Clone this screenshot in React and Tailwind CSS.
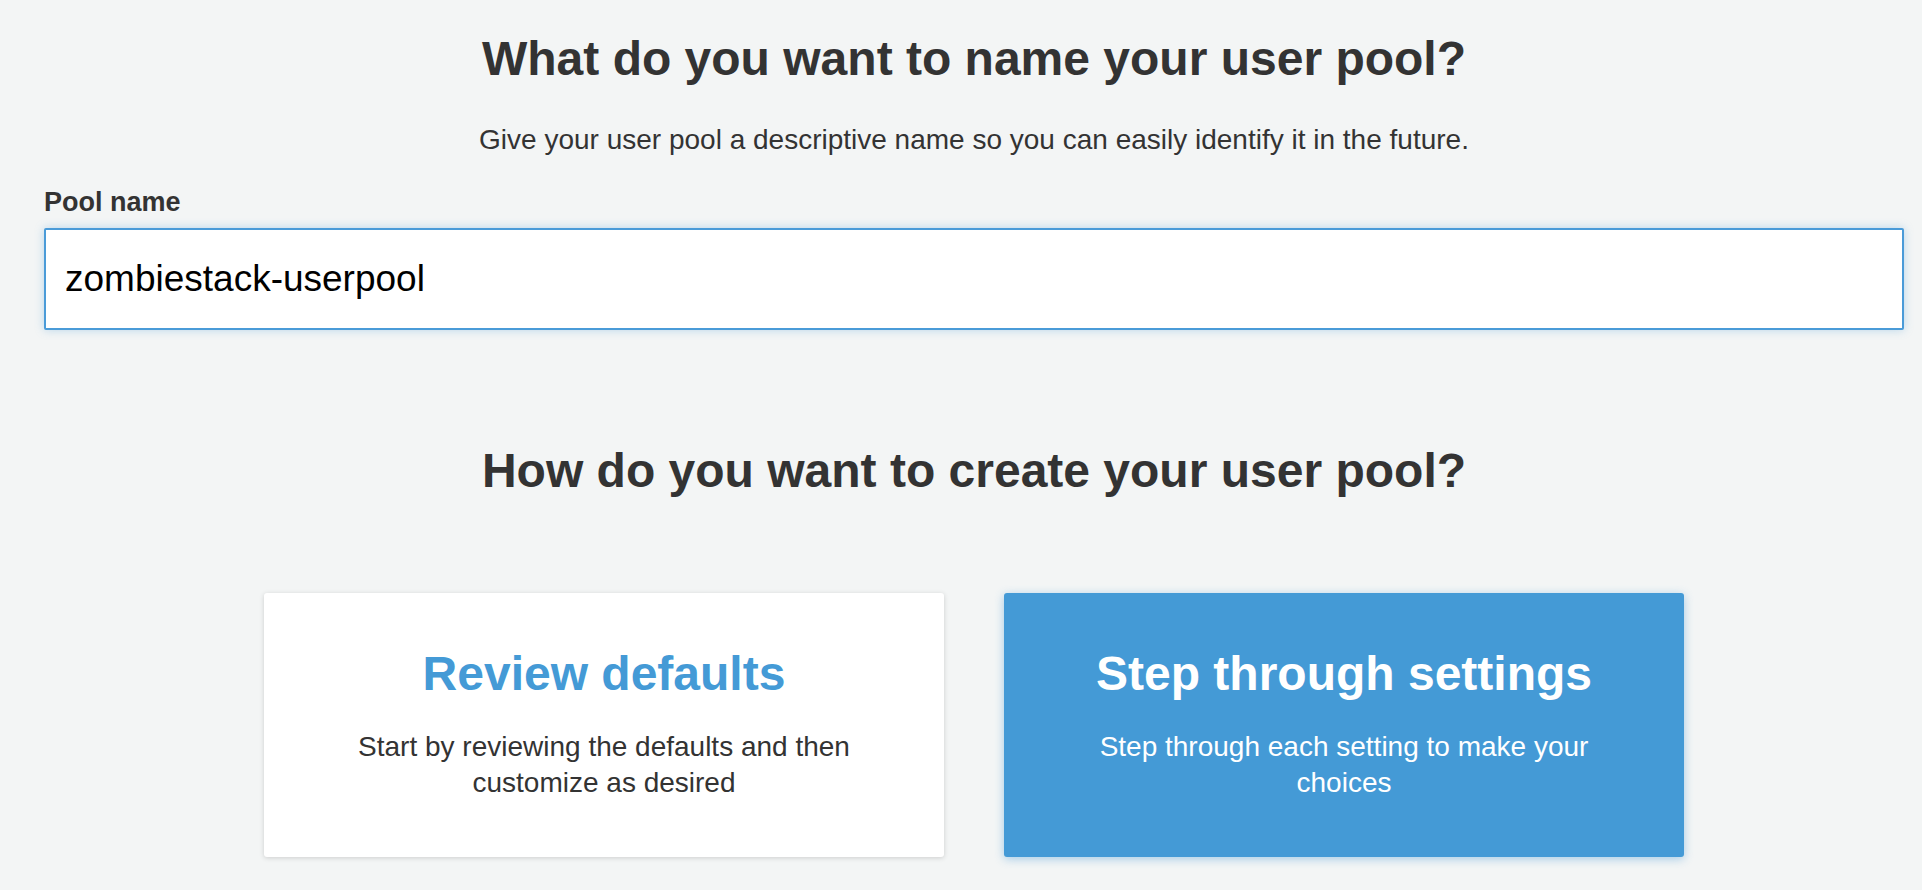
import React from 'react';

const ChoiceCard = ({ title, text, active }) => (
  <div
    className={`w-[680px] h-[264px] flex flex-col justify-center items-center text-center px-[60px] rounded-[3px] ${
      active
        ? 'bg-[#449ad6] text-white shadow-[0_2px_10px_rgba(68,154,214,0.45)]'
        : 'bg-white text-[#333] shadow-[0_1px_5px_rgba(0,0,0,0.16)]'
    }`}
  >
    <h3 className={`text-[48px] leading-[48px] font-bold ${active ? 'text-white' : 'text-[#449ad6]'}`}>{title}</h3>
    <p className="mt-[31px] text-[28px] leading-[36px]">{text}</p>
  </div>
);

const App = () => {
  return (
    <div className="min-h-screen bg-[#f3f5f5] text-[#333] font-['Liberation_Sans',Arial,sans-serif] pl-[44px] pr-[18px] pt-[35px]">
      <h1 className="text-center text-[48px] leading-[48px] font-bold">What do you want to name your user pool?</h1>
      <p className="mt-[39px] text-center text-[28px] leading-[36px]">
        Give your user pool a descriptive name so you can easily identify it in the future.
      </p>

      <label htmlFor="pool-name" className="block mt-[28px] text-[27px] leading-[32px] font-bold">
        Pool name
      </label>
      <input
        id="pool-name"
        readOnly
        value="zombiestack-userpool"
        className="mt-[10px] block w-full h-[102px] px-[19px] bg-white border-2 border-[#4a9bd8] rounded-[2px] text-[37px] text-black font-['Liberation_Sans',Arial,sans-serif] outline-none shadow-[0_0_10px_rgba(74,155,216,0.35)]"
      />

      <h2 className="mt-[117px] text-center text-[48px] leading-[48px] font-bold">How do you want to create your user pool?</h2>

      <div className="mt-[98px] flex justify-center gap-[60px]">
        <ChoiceCard title="Review defaults" text="Start by reviewing the defaults and then customize as desired" />
        <ChoiceCard title="Step through settings" text="Step through each setting to make your choices" active />
      </div>
    </div>
  );
};

export default App;
